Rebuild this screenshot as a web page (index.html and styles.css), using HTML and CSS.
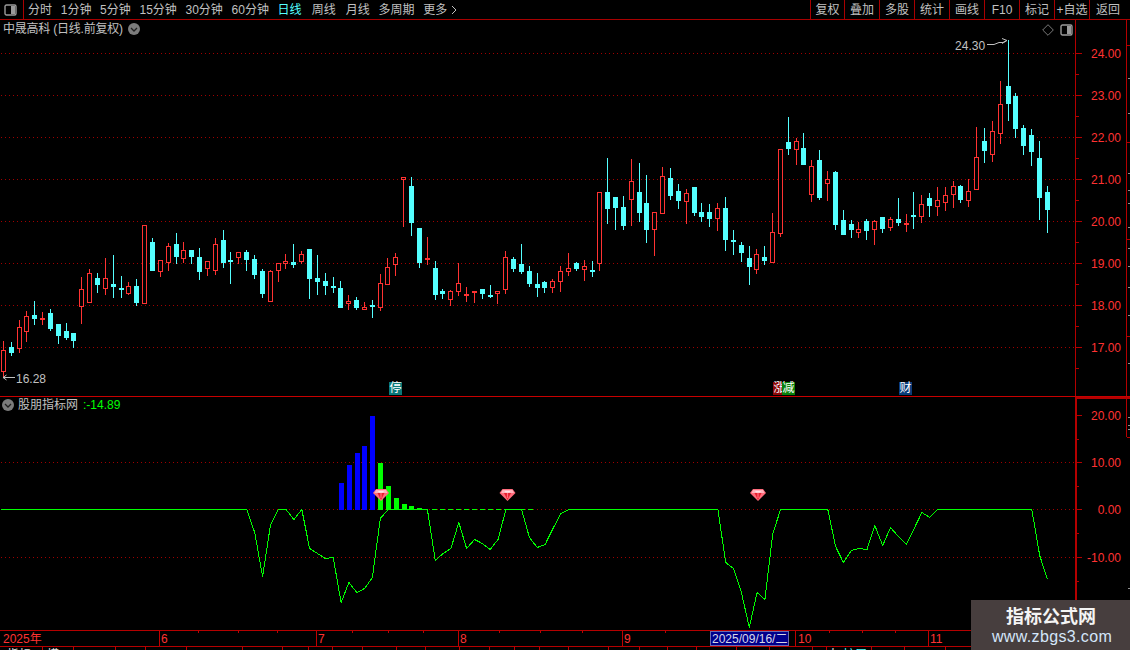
FILE: index.html
```html
<!DOCTYPE html>
<html lang="zh">
<head>
<meta charset="utf-8">
<title>中晟高科</title>
<link rel="stylesheet" href="styles.css">
</head>
<body>
<div class="screen">
  <header class="toolbar">
    <div class="tool-left">
      <div class="side-toggle">
        <svg class="toggle-icon" viewBox="0 0 13 12"><rect x="1" y="1" width="11" height="10" rx="1.5" class="toggle-frame"/><rect x="7" y="2" width="4" height="8" class="toggle-fill"/></svg>
      </div>
      <nav class="periods">
        <span class="tb">分时</span>
        <span class="tb">1分钟</span>
        <span class="tb">5分钟</span>
        <span class="tb">15分钟</span>
        <span class="tb">30分钟</span>
        <span class="tb">60分钟</span>
        <span class="tb active wide">日线</span>
        <span class="tb wide">周线</span>
        <span class="tb">月线</span>
        <span class="tb">多周期</span>
        <span class="tb">更多<svg class="more-icon" viewBox="0 0 6 10"><path d="M1 1L5 5L1 9"/></svg></span>
      </nav>
    </div>
    <nav class="actions">
      <span class="act">复权</span>
      <span class="act">叠加</span>
      <span class="act">多股</span>
      <span class="act">统计</span>
      <span class="act">画线</span>
      <span class="act">F10</span>
      <span class="act">标记</span>
      <span class="act">+自选</span>
      <span class="act last">返回</span>
    </nav>
  </header>

  <section class="panel price-panel">
    <svg id="price-plot" class="plot" width="1075" height="376" viewBox="0 20 1075 376"></svg>
    <svg id="price-axis" class="axis" width="55" height="376" viewBox="1075 20 55 376"></svg>
    <div class="legend price-legend">
      <span class="legend-title">中晟高科 (日线.前复权)</span>
      <svg class="chev" viewBox="0 0 12 12"><circle cx="6" cy="6" r="6" class="chev-disc"/><path d="M3 5L6 8L9 5" class="chev-mark"/></svg>
    </div>
    <div class="plot-tools">
      <svg class="diamond" viewBox="0 0 12 12"><path d="M6 .7L11.3 6L6 11.3L.7 6Z"/></svg>
      <svg class="toggle-icon" viewBox="0 0 13 12"><rect x="1" y="1" width="11" height="10" rx="1.5" class="toggle-frame"/><rect x="7" y="2" width="4" height="8" class="toggle-fill"/></svg>
    </div>
    <span class="mark mark-ting">停</span>
    <span class="mark mark-zhang">涨</span>
    <span class="mark mark-jian">减</span>
    <span class="mark mark-cai">财</span>
  </section>

  <section class="panel ind-panel">
    <svg id="ind-plot" class="plot" width="1075" height="233" viewBox="0 397 1075 233"></svg>
    <svg id="ind-axis" class="axis" width="55" height="233" viewBox="1075 397 55 233"></svg>
    <div class="legend ind-legend">
      <svg class="chev" viewBox="0 0 12 12"><circle cx="6" cy="6" r="6" class="chev-disc"/><path d="M3 5L6 8L9 5" class="chev-mark"/></svg>
      <span>股朋指标网</span>
      <span class="ind-value">:-14.89</span>
    </div>
  </section>

  <svg id="time-axis" class="time-axis" width="1130" height="15" viewBox="0 631 1130 15"></svg>
  <svg id="tab-strip" class="tab-strip" width="1130" height="3" viewBox="0 647 1130 3"></svg>

  <aside class="watermark">
    <div class="wm-name">指标公式网</div>
    <div class="wm-url">www.zbgs3.com</div>
  </aside>
</div>
<script src="chart.js"></script>
</body>
</html>
```

FILE: styles.css
```css
html, body {
  margin: 0;
  padding: 0;
  background: #000;
}
.screen {
  position: relative;
  width: 1130px;
  height: 650px;
  overflow: hidden;
  background: #000;
  color: #c0c0c0;
  font: 12px/1 "Liberation Sans", "Noto Sans CJK SC", sans-serif;
  display: flex;
  flex-direction: column;
}
svg { display: block; }

.toolbar {
  height: 19px;
  flex: none;
  display: flex;
  justify-content: space-between;
  border-bottom: 1px solid #a80000;
}
.tool-left { display: flex; }
.side-toggle {
  width: 19px;
  border-right: 1px solid #a80000;
  display: flex;
  align-items: center;
  padding-left: 4px;
}
.toggle-icon { width: 13px; height: 12px; }
.toggle-frame { fill: #000; stroke: #9a9a9a; stroke-width: 1.4; }
.toggle-fill { fill: #9a9a9a; }
.periods {
  display: flex;
  align-items: center;
  gap: 8.7px;
  padding-left: 4px;
}
.tb { white-space: nowrap; display: flex; align-items: center; }
.tb.wide { margin-right: 1.4px; }
.tb.active { color: #54ffff; }
.more-icon { width: 6px; height: 10px; margin-left: 4px; }
.more-icon path { fill: none; stroke: #c0c0c0; stroke-width: 1; }
.actions { display: flex; margin-right: 4px; }
.act {
  width: 34px;
  border-left: 1px solid #a80000;
  display: flex;
  align-items: center;
  justify-content: center;
  white-space: nowrap;
}
.act:first-child { width: 33px; }
.act.last { width: 36px; }

.panel { position: relative; display: flex; flex: none; }
.price-panel { height: 376px; border-bottom: 1px solid #c80000; }
.ind-panel { height: 233px; border-bottom: 1px solid #b40000; }

.legend {
  position: absolute;
  display: flex;
  align-items: center;
  white-space: nowrap;
}
.price-legend { left: 3px; top: 3px; gap: 5px; height: 12px; }
.legend-title { letter-spacing: -.22px; }
.ind-legend { left: 2px; top: 2px; height: 12px; gap: 4px; }
.ind-value { color: #00ff00; margin-left: 1px; }
.chev { width: 12px; height: 12px; }
.chev-disc { fill: #7c7c7c; }
.chev-mark { fill: none; stroke: #202020; stroke-width: 1.3; }

.plot-tools {
  position: absolute;
  left: 1042px;
  top: 4px;
  display: flex;
  align-items: center;
  gap: 6px;
}
.diamond { width: 12px; height: 12px; }
.diamond path { fill: none; stroke: #7a7a7a; stroke-width: 1; }

.mark {
  position: absolute;
  top: 362px;
  width: 13px;
  height: 13px;
  color: #fff;
  font-size: 12px;
  line-height: 13px;
  text-align: center;
}
.mark-ting { left: 389px; background: #0a7878; }
.mark-zhang { left: 773px; background: #8c0808; }
.mark-jian { left: 782px; background: #0a800a; }
.mark-cai { left: 899px; background: #0a3c78; }

.grid { stroke: #a00000; stroke-width: 1; stroke-dasharray: 1 3; }
.axis-line { stroke: #b40000; stroke-width: 1; }
.axis-thick { stroke: #b40000; stroke-width: 2; }
.tick { stroke: #b40000; stroke-width: 1; }
.side-tick { stroke: #909090; stroke-width: 1; }
.axis-label {
  fill: #ff3232;
  font: 12px "Liberation Sans", sans-serif;
  text-anchor: end;
}
.price-note {
  fill: #c0c0c0;
  font: 12px "Liberation Sans", sans-serif;
}
.note-arrow { fill: none; stroke: #c0c0c0; stroke-width: 1; }

.wick-r, .body-r { fill: #ff3232; }
.wick-c, .body-c { fill: #54ffff; }
.body-hole { fill: #000; }

.bar-up { fill: #0000ff; }
.bar-down { fill: #00ff00; }
.curve { fill: none; stroke: #00ff00; stroke-width: 1; }
.dash-zero { stroke: #00ff00; stroke-width: 1; stroke-dasharray: 5 3; }
.gem-edge { fill: #ff6c7c; }
.gem-top { fill: #ffb4bc; }
.gem-core { fill: #e8202e; }
.gem-light { fill: #ffe0e4; }

.time-axis { flex: none; border-bottom: 1px solid #b40000; box-sizing: content-box; }
.tab-strip { flex: none; }
.t-sep { stroke: #c00000; stroke-width: 1; }
.t-label { fill: #ff3232; font: 12px "Liberation Sans", "Noto Sans CJK SC", sans-serif; }
.t-date-box { fill: #00008c; stroke: #6a6ab0; stroke-width: 1; }
.t-date { fill: #d8d8e8; font: 12px "Liberation Sans", "Noto Sans CJK SC", sans-serif; }
.tab-text { fill: #e0e0e0; font: 12px "Liberation Sans", "Noto Sans CJK SC", sans-serif; }
.tab-text.on { fill: #54ffff; }

.watermark {
  position: absolute;
  right: 0;
  bottom: 0;
  width: 159px;
  height: 50px;
  background: #473e3e;
  text-align: center;
}
.wm-name {
  color: #f4f4f4;
  font: bold 18px/20px "Noto Sans CJK SC", sans-serif;
  margin-top: 5px;
  margin-left: 1px;
}
.wm-url {
  color: #d4e6fa;
  font: 16px/20px "Liberation Sans", sans-serif;
  letter-spacing: .35px;
  margin-left: 3px;
  margin-top: 2px;
}
```

FILE: chart.js
```js
var NS = "http://www.w3.org/2000/svg";
function add(parent, tag, attrs, text) {
  var n = document.createElementNS(NS, tag);
  for (var k in attrs) n.setAttribute(k, attrs[k]);
  if (text !== undefined) n.textContent = text;
  parent.appendChild(n);
  return n;
}
function xAt(i) { return Math.floor(3.3 + 7.85 * i); }

/* type, high, body top, body bottom, low (page pixel rows) */
var candles = [
["r",341,350,371,376],["c",342,347,352,355],["r",320,327,348,352],["r",311,316,331,341],["c",301,315,318,324],
["r",312,318,319,324],["c",309,313,328,330],["c",324,324,335,343],["c",323,331,337,339],["c",333,333,340,347],
["r",277,289,306,323],["r",269,273,302,302],["c",273,278,284,292],["r",258,278,288,294],["c",255,284,286,297],
["c",276,288,289,297],["r",282,286,293,294],["c",279,286,302,305],["r",225,225,303,303],["c",238,242,270,270],
["r",260,260,271,276],["r",243,246,262,270],["c",233,244,256,263],["r",242,250,258,262],["c",250,250,256,263],
["c",248,257,271,279],["r",261,261,268,275],["r",238,244,270,274],["c",230,240,262,267],["c",252,260,261,283],
["r",252,252,257,263],["c",250,252,259,270],["c",255,259,274,278],["c",269,271,293,297],["r",270,271,301,301],
["r",263,263,270,281],["r",254,261,263,268],["c",244,262,264,267],["r",251,254,261,263],["c",249,249,278,298],
["c",255,278,281,294],["c",273,281,285,294],["c",277,286,287,292],["c",281,288,307,307],["r",295,301,303,309],
["c",297,300,307,309],["r",302,307,309,309],["c",300,305,306,317],["r",274,283,307,310],["r",258,267,284,284],
["r",253,257,264,275],["r",177,177,179,226],["c",177,186,222,235],["c",228,228,262,267],["r",237,258,259,264],
["c",261,268,294,299],["c",289,291,293,298],["r",290,291,299,305],["r",263,283,291,295],["r",287,294,295,301],
["r",291,291,292,302],["c",289,289,293,298],["c",285,295,296,297],["r",291,291,293,303],["r",251,257,289,293],
["c",257,259,268,271],["c",244,264,271,273],["c",266,271,283,286],["c",273,284,287,296],["c",281,282,287,292],
["r",279,281,287,292],["r",266,271,281,291],["r",253,268,271,275],["c",262,263,268,270],["r",260,266,269,280],
["c",261,270,271,276],["r",192,192,263,270],["c",158,192,208,223],["c",197,197,207,229],["c",196,207,225,229],
["r",159,181,199,225],["c",163,192,212,221],["c",175,203,229,242],["r",212,212,229,255],["r",167,176,213,213],
["c",168,178,195,199],["c",184,191,200,208],["r",189,193,201,223],["c",187,187,212,215],["c",203,212,216,221],
["c",204,212,218,226],["r",203,208,218,230],["c",197,208,239,250],["c",230,240,241,254],["c",242,245,252,261],
["c",246,258,266,284],["r",249,254,269,273],["c",246,257,260,264],["r",213,232,262,262],["r",149,149,233,236],
["c",117,142,148,154],["r",138,141,149,164],["c",133,148,164,164],["r",160,166,194,201],["c",150,160,197,199],
["r",171,179,183,200],["c",171,172,224,229],["c",210,220,234,234],["c",220,224,229,237],["r",222,229,232,237],
["c",219,221,230,239],["r",220,221,229,244],["c",217,217,228,232],["r",217,219,227,230],["c",198,219,222,225],
["r",214,223,224,231],["c",192,215,216,228],["r",195,204,216,222],["c",193,198,205,216],["r",187,200,206,215],
["r",187,195,202,210],["r",181,186,194,207],["c",185,186,199,202],["r",179,191,200,206],["r",127,157,189,189],
["c",128,141,150,162],["r",121,131,154,161],["r",81,104,133,143],["c",40,86,103,120],["c",93,96,128,137],
["c",125,128,145,154],["c",129,135,151,165],["c",141,158,197,219],["c",186,192,209,232]
];

var plot = document.getElementById("price-plot");
var priceRows = [53, 95, 137, 179, 221, 263, 305, 347];
priceRows.forEach(function (y) {
  add(plot, "line", {x1: 1, x2: 1075, y1: y + .5, y2: y + .5, "class": "grid"});
});
var candleG = add(plot, "g", {"shape-rendering": "crispEdges"});
candles.forEach(function (c, i) {
  var x = xAt(i), t = c[0], hi = c[1], top = c[2], bot = c[3], lo = c[4];
  add(candleG, "rect", {x: x, y: hi, width: 1, height: lo - hi + 1, "class": "wick-" + t});
  add(candleG, "rect", {x: x - 2, y: top, width: 5, height: bot - top + 1, "class": "body-" + t});
  if (t === "r" && bot - top >= 2) {
    add(candleG, "rect", {x: x - 1, y: top + 1, width: 3, height: bot - top - 1, "class": "body-hole"});
  }
});
add(plot, "text", {x: 955, y: 50, "class": "price-note", "letter-spacing": ".05"}, "24.30");
add(plot, "path", {d: "M987 44.5H994L999 42.5H1003L1006.5 40.5M1002 38.5L1007 40.5L1002 43.5", "class": "note-arrow"});
add(plot, "text", {x: 16, y: 383, "class": "price-note"}, "16.28");
add(plot, "path", {d: "M3 377.5H15M6.5 375L3 377.5L6.5 380", "class": "note-arrow"});

var axis = document.getElementById("price-axis");
axis.setAttribute("shape-rendering", "crispEdges");
add(axis, "line", {x1: 1075.5, x2: 1075.5, y1: 20, y2: 396, "class": "axis-line"});
add(axis, "line", {x1: 1126.5, x2: 1126.5, y1: 20, y2: 396, "class": "axis-line"});
var labels = ["24.00", "23.00", "22.00", "21.00", "20.00", "19.00", "18.00", "17.00"];
priceRows.forEach(function (y, i) {
  add(axis, "line", {x1: 1076, x2: 1082, y1: y + .5, y2: y + .5, "class": "tick"});
  add(axis, "line", {x1: 1076, x2: 1079, y1: y + 21.5, y2: y + 21.5, "class": "tick"});
  add(axis, "text", {x: 1121, y: y + 5, "class": "axis-label"}, labels[i]);
});
[45, 142, 239, 336].forEach(function (y) {
  add(axis, "line", {x1: 1127, x2: 1130, y1: y + .5, y2: y + .5, "class": "tick"});
});
[78, 113, 173, 190, 203, 227, 248, 266, 287, 315, 363].forEach(function (y) {
  add(axis, "line", {x1: 1128, x2: 1130, y1: y + .5, y2: y + .5, "class": "side-tick"});
});

/* indicator */
var ind = document.getElementById("ind-plot");
[462, 509, 557].forEach(function (y) {
  add(ind, "line", {x1: 1, x2: 1075, y1: y + .5, y2: y + .5, "class": "grid"});
});
var barsG = add(ind, "g", {"shape-rendering": "crispEdges"});
[[339,483,"up"],[347,465,"up"],[355,453,"up"],[362,446,"up"],[370,416,"up"],
 [378,463,"down"],[386,486,"down"],[394,498,"down"],[402,504,"down"],[409,506,"down"],[417,508,"down"]
].forEach(function (b) {
  add(barsG, "rect", {x: b[0], y: b[1], width: 5, height: 510 - b[1], "class": "bar-" + b[2]});
});
add(barsG, "line", {x1: 432, x2: 534, y1: 509.5, y2: 509.5, "class": "dash-zero"});

var Z = 509;
var curveY = {
  31:Z,32:532,33:576,34:525,35:Z,36:Z,37:519,38:Z,39:548,40:553,41:558,42:557,43:602,44:582,45:592,46:588,47:577,48:518,49:Z,
  54:Z,55:560,56:553,57:548,58:522,59:548,60:539,61:543,62:549,63:539,64:Z,65:Z,66:Z,67:537,68:547,69:544,70:528,71:513,72:Z,
  91:Z,92:562,93:568,94:592,95:627,96:592,97:599,98:533,99:Z,105:Z,106:546,107:562,108:550,109:548,110:549,111:525,112:545,
  113:527,114:536,115:544,116:528,117:512,118:517,119:Z,131:Z,132:555,133:579
};
var pts = ["1,509.5"];
Object.keys(curveY).map(Number).sort(function (a, b) { return a - b; }).forEach(function (i) {
  pts.push((3.5 + 7.85 * i).toFixed(1) + "," + (curveY[i] + .5));
});
add(ind, "polyline", {points: pts.join(" "), "class": "curve", "shape-rendering": "crispEdges"});

[373, 499.5, 750].forEach(function (x) {
  var g = add(ind, "g", {transform: "translate(" + x + " 489)"});
  add(g, "path", {d: "M3 0H13L16 4L8 12L0 4Z", "class": "gem-edge"});
  add(g, "path", {d: "M3 1H13L14.5 4H1.5Z", "class": "gem-top"});
  add(g, "path", {d: "M4.5 4H11.5L8 11Z", "class": "gem-core"});
  add(g, "path", {d: "M5 2H11L10 3.5H6Z", "class": "gem-light"});
  add(g, "path", {d: "M7.4 4H8.6V9H7.4Z", "class": "gem-edge"});
});

var iax = document.getElementById("ind-axis");
iax.setAttribute("shape-rendering", "crispEdges");
add(iax, "line", {x1: 1076, x2: 1076, y1: 397, y2: 630, "class": "axis-thick"});
add(iax, "line", {x1: 1077, x2: 1130, y1: 398, y2: 398, "class": "axis-thick"});
add(iax, "line", {x1: 1126.5, x2: 1126.5, y1: 399, y2: 437, "class": "axis-line"});
add(iax, "line", {x1: 1127, x2: 1130, y1: 437.5, y2: 437.5, "class": "axis-line"});
[[415,"20.00"],[462,"10.00"],[509,"0.00"],[557,"-10.00"]].forEach(function (r) {
  add(iax, "line", {x1: 1077, x2: 1082, y1: r[0] + .5, y2: r[0] + .5, "class": "tick"});
  add(iax, "text", {x: 1121, y: r[0] + 5, "class": "axis-label"}, r[1]);
});
[439, 486, 533, 581].forEach(function (y) {
  add(iax, "line", {x1: 1077, x2: 1079, y1: y + .5, y2: y + .5, "class": "tick"});
});
[417, 425, 429, 588].forEach(function (y) {
  add(iax, "line", {x1: 1128, x2: 1130, y1: y + .5, y2: y + .5, "class": "side-tick"});
});

/* time axis */
var ta = document.getElementById("time-axis");
[159, 316, 458, 622, 795, 928, 1075].forEach(function (x) {
  add(ta, "line", {x1: x + .5, x2: x + .5, y1: 631, y2: 646, "class": "t-sep", "shape-rendering": "crispEdges"});
});
[198, 238, 277, 352, 388, 423, 499, 540, 582, 665, 829, 862, 895].forEach(function (x) {
  add(ta, "line", {x1: x + .5, x2: x + .5, y1: 631, y2: 633, "class": "t-sep", "shape-rendering": "crispEdges"});
});
[["2025年",3],["6",161],["7",318],["8",460],["9",624],["10",798],["11",930]].forEach(function (l) {
  add(ta, "text", {x: l[1], y: 643, "class": "t-label"}, l[0]);
});
add(ta, "rect", {x: 710.5, y: 631.5, width: 78, height: 14, "class": "t-date-box", "shape-rendering": "crispEdges"});
add(ta, "text", {x: 712, y: 643, "class": "t-date"}, "2025/09/16/二");

/* bottom tabs: only the top pixels of the row are in view */
var ts = document.getElementById("tab-strip");
[42, 73, 115, 145, 186, 242, 282, 308, 332, 362, 396, 425, 459, 489, 514, 539, 568, 608, 639, 667, 696, 736, 769, 812, 826, 871, 904, 945].forEach(function (x) {
  add(ts, "line", {x1: x + .5, x2: x + .5, y1: 647, y2: 650, "class": "t-sep", "shape-rendering": "crispEdges"});
});
add(ts, "text", {x: 7, y: 659, "class": "tab-text"}, "指标");
add(ts, "text", {x: 47, y: 659, "class": "tab-text"}, "模");
add(ts, "text", {x: 827, y: 659, "class": "tab-text"}, "人");
add(ts, "text", {x: 843, y: 659, "class": "tab-text on"}, "扩展");
```
